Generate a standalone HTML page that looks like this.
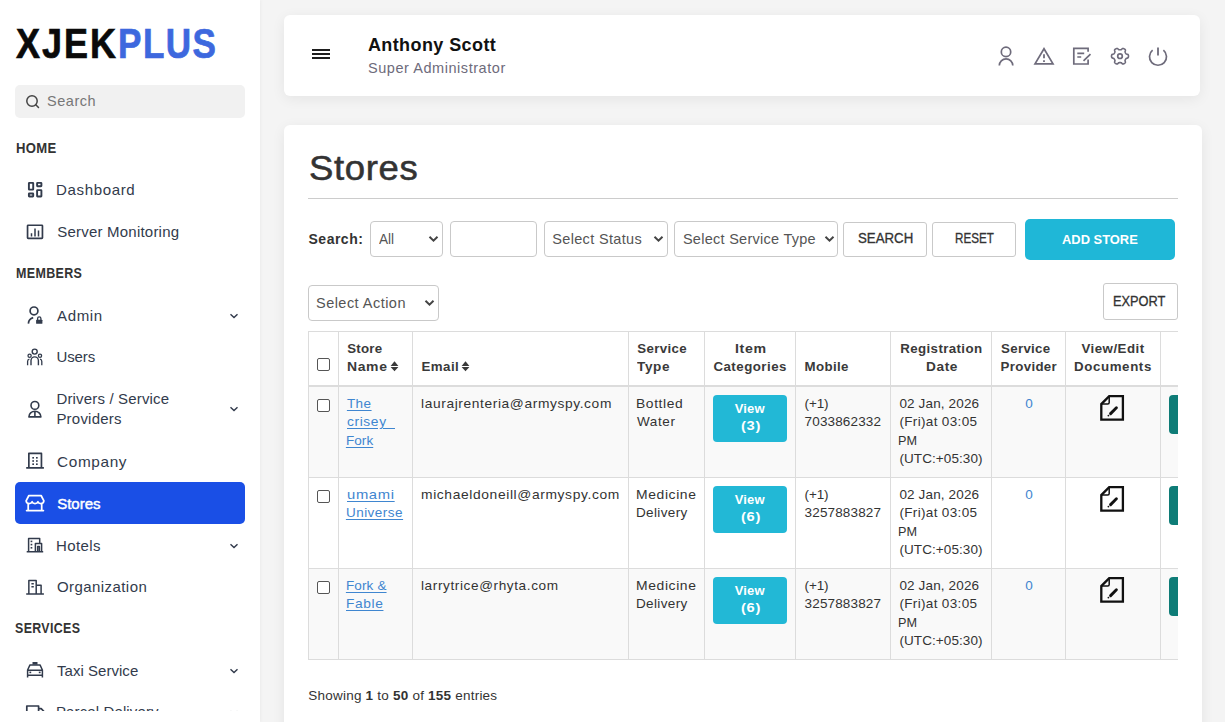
<!DOCTYPE html>
<html><head><meta charset="utf-8"><title>Stores</title>
<style>
html,body{margin:0;padding:0;}
body{width:1225px;height:722px;overflow:hidden;position:relative;background:#f4f4f4;font-family:"Liberation Sans", sans-serif;}
.t{position:absolute;white-space:nowrap;line-height:1;}
</style></head><body>
<div style="position:absolute;left:0.00px;top:0.00px;width:260.00px;height:722.00px;background:#fff;box-shadow:1px 0 3px rgba(0,0,0,0.04);"></div>
<div class="t" style="left:15.80px;top:21.90px;font-size:43px;font-weight:700;color:#0a0a0a;letter-spacing:2.400px;transform:scaleX(0.8370);transform-origin:0 0;-webkit-text-stroke:0.7px #0a0a0a;">XJEK</div>
<div class="t" style="left:118.17px;top:21.90px;font-size:43px;font-weight:700;color:#3d68de;letter-spacing:1.800px;transform:scaleX(0.8162);transform-origin:0 0;-webkit-text-stroke:0.7px #3d68de;">PLUS</div>
<div style="position:absolute;left:15.00px;top:85.00px;width:230.00px;height:33.00px;background:#f1f1f1;border-radius:5px;"></div>
<svg style="position:absolute;left:25px;top:94px" width="16" height="16" viewBox="0 0 16 16"><circle cx="7" cy="7" r="5.2" fill="none" stroke="#444" stroke-width="1.5"/><line x1="10.8" y1="10.8" x2="13.5" y2="13.5" stroke="#444" stroke-width="1.5" stroke-linecap="round"/></svg>
<div class="t" style="left:47.10px;top:94.23px;font-size:14.5px;font-weight:400;color:#777;letter-spacing:0.504px;">Search</div>
<div class="t" style="left:15.50px;top:140.98px;font-size:14.2px;font-weight:700;color:#333;letter-spacing:0.400px;transform:scaleX(0.9215);transform-origin:0 0;">HOME</div>
<div class="t" style="left:15.50px;top:266.18px;font-size:14.2px;font-weight:700;color:#333;letter-spacing:0.400px;transform:scaleX(0.8797);transform-origin:0 0;">MEMBERS</div>
<div class="t" style="left:15.40px;top:621.38px;font-size:14.2px;font-weight:700;color:#333;letter-spacing:0.400px;transform:scaleX(0.8750);transform-origin:0 0;">SERVICES</div>
<div class="t" style="left:56.29px;top:182.30px;font-size:15px;font-weight:400;color:#323b4c;letter-spacing:0.600px;transform:scaleX(1.0060);transform-origin:0 0;">Dashboard</div>
<div class="t" style="left:57.30px;top:224.20px;font-size:15px;font-weight:400;color:#323b4c;letter-spacing:0.210px;">Server Monitoring</div>
<div class="t" style="left:57.40px;top:307.60px;font-size:15px;font-weight:400;color:#323b4c;letter-spacing:0.600px;transform:scaleX(1.0051);transform-origin:0 0;">Admin</div>
<svg style="position:absolute;left:229px;top:311.8px" width="10" height="8" viewBox="0 0 10 8"><polyline points="1.5,2.2 5,5.6 8.5,2.2" fill="none" stroke="#323b4c" stroke-width="1.4"/></svg>
<div class="t" style="left:56.40px;top:349.30px;font-size:15px;font-weight:400;color:#323b4c;letter-spacing:-0.092px;">Users</div>
<div class="t" style="left:56.40px;top:390.60px;font-size:15px;font-weight:400;color:#323b4c;letter-spacing:0.170px;">Drivers / Service</div>
<div class="t" style="left:56.40px;top:411.00px;font-size:15px;font-weight:400;color:#323b4c;letter-spacing:0.218px;">Providers</div>
<svg style="position:absolute;left:229px;top:405px" width="10" height="8" viewBox="0 0 10 8"><polyline points="1.5,2.2 5,5.6 8.5,2.2" fill="none" stroke="#323b4c" stroke-width="1.4"/></svg>
<div class="t" style="left:56.60px;top:453.70px;font-size:15px;font-weight:400;color:#323b4c;letter-spacing:0.600px;transform:scaleX(1.0249);transform-origin:0 0;">Company</div>
<div style="position:absolute;left:15.00px;top:482.00px;width:230.00px;height:41.50px;background:#1a4fe6;border-radius:5px;"></div>
<div class="t" style="left:57.20px;top:495.50px;font-size:15px;font-weight:400;color:#fff;letter-spacing:-0.010px;-webkit-text-stroke:0.45px #fff;">Stores</div>
<div class="t" style="left:56.00px;top:537.80px;font-size:15px;font-weight:400;color:#323b4c;letter-spacing:0.377px;">Hotels</div>
<svg style="position:absolute;left:229px;top:542px" width="10" height="8" viewBox="0 0 10 8"><polyline points="1.5,2.2 5,5.6 8.5,2.2" fill="none" stroke="#323b4c" stroke-width="1.4"/></svg>
<div class="t" style="left:57.00px;top:579.00px;font-size:15px;font-weight:400;color:#323b4c;letter-spacing:0.427px;">Organization</div>
<div class="t" style="left:57.00px;top:662.70px;font-size:15px;font-weight:400;color:#323b4c;letter-spacing:0.035px;">Taxi Service</div>
<svg style="position:absolute;left:229px;top:667px" width="10" height="8" viewBox="0 0 10 8"><polyline points="1.5,2.2 5,5.6 8.5,2.2" fill="none" stroke="#323b4c" stroke-width="1.4"/></svg>
<div class="t" style="left:56.00px;top:704.30px;font-size:15px;font-weight:400;color:#323b4c;letter-spacing:0.117px;">Parcel Delivery</div>
<svg style="position:absolute;left:229px;top:708.5px" width="10" height="8" viewBox="0 0 10 8"><polyline points="1.5,2.2 5,5.6 8.5,2.2" fill="none" stroke="#323b4c" stroke-width="1.4"/></svg>
<div style="position:absolute;left:284.00px;top:15.00px;width:915.50px;height:81.00px;background:#fff;border-radius:6px;box-shadow:0 3px 14px rgba(0,0,0,0.065);"></div>
<div style="position:absolute;left:312.00px;top:49.00px;width:18.00px;height:2.00px;background:#1e1e1e;"></div>
<div style="position:absolute;left:312.00px;top:53.00px;width:18.00px;height:2.00px;background:#1e1e1e;"></div>
<div style="position:absolute;left:312.00px;top:57.00px;width:18.00px;height:2.00px;background:#1e1e1e;"></div>
<div class="t" style="left:367.90px;top:35.76px;font-size:18px;font-weight:700;color:#111;letter-spacing:0.409px;">Anthony Scott</div>
<div class="t" style="left:368.00px;top:60.83px;font-size:14.5px;font-weight:400;color:#6e6b7b;letter-spacing:0.550px;">Super Administrator</div>
<div style="position:absolute;left:284.00px;top:125.00px;width:918.00px;height:700.00px;background:#fff;border-radius:6px;box-shadow:0 3px 14px rgba(0,0,0,0.065);"></div>
<div class="t" style="left:308.56px;top:150.37px;font-size:35px;font-weight:400;color:#333;letter-spacing:0.600px;transform:scaleX(1.0443);transform-origin:0 0;-webkit-text-stroke:0.55px #333;">Stores</div>
<div style="position:absolute;left:308.00px;top:198.00px;width:870.00px;height:1.00px;background:#ccc;"></div>
<div class="t" style="left:308.50px;top:232.25px;font-size:14px;font-weight:700;color:#333;letter-spacing:0.501px;">Search:</div>
<div style="position:absolute;left:370.00px;top:221.00px;width:71.00px;height:34.00px;border:1px solid #c9c9c9;border-radius:4px;background:#fff;"></div>
<svg style="position:absolute;left:428.2px;top:235.0px" width="11" height="8" viewBox="0 0 11 8"><polyline points="1.5,1.8 5.5,5.6 9.5,1.8" fill="none" stroke="#444" stroke-width="2"/></svg>
<div class="t" style="left:378.50px;top:231.83px;font-size:14.5px;font-weight:400;color:#555;transform:scaleX(0.9375);transform-origin:0 0;">All</div>
<div style="position:absolute;left:450.00px;top:221.00px;width:85.00px;height:34.00px;border:1px solid #c9c9c9;border-radius:4px;background:#fff;"></div>
<div style="position:absolute;left:544.00px;top:221.00px;width:122.00px;height:34.00px;border:1px solid #c9c9c9;border-radius:4px;background:#fff;"></div>
<svg style="position:absolute;left:652.8px;top:235.0px" width="11" height="8" viewBox="0 0 11 8"><polyline points="1.5,1.8 5.5,5.6 9.5,1.8" fill="none" stroke="#444" stroke-width="2"/></svg>
<div class="t" style="left:552.30px;top:231.83px;font-size:14.5px;font-weight:400;color:#555;letter-spacing:0.326px;">Select Status</div>
<div style="position:absolute;left:674.00px;top:221.00px;width:162.00px;height:34.00px;border:1px solid #c9c9c9;border-radius:4px;background:#fff;"></div>
<svg style="position:absolute;left:823.9px;top:235.0px" width="11" height="8" viewBox="0 0 11 8"><polyline points="1.5,1.8 5.5,5.6 9.5,1.8" fill="none" stroke="#444" stroke-width="2"/></svg>
<div class="t" style="left:682.90px;top:231.83px;font-size:14.5px;font-weight:400;color:#555;letter-spacing:0.273px;">Select Service Type</div>
<div style="position:absolute;left:308.00px;top:285.00px;width:129.00px;height:34.00px;border:1px solid #c9c9c9;border-radius:4px;background:#fff;"></div>
<svg style="position:absolute;left:424.4px;top:299.0px" width="11" height="8" viewBox="0 0 11 8"><polyline points="1.5,1.8 5.5,5.6 9.5,1.8" fill="none" stroke="#444" stroke-width="2"/></svg>
<div class="t" style="left:316.00px;top:296.23px;font-size:14.5px;font-weight:400;color:#555;letter-spacing:0.470px;">Select Action</div>
<div style="position:absolute;left:843.00px;top:222.00px;width:82.00px;height:33.00px;border:1px solid #c9c9c9;border-radius:3px;background:#fff;"></div>
<div class="t" style="left:858.40px;top:232.32px;font-size:13.8px;font-weight:400;color:#333;transform:scaleX(0.9605);transform-origin:0 0;-webkit-text-stroke:0.3px #333;">SEARCH</div>
<div style="position:absolute;left:932.00px;top:222.00px;width:82.00px;height:33.00px;border:1px solid #c9c9c9;border-radius:3px;background:#fff;"></div>
<div class="t" style="left:954.86px;top:232.32px;font-size:13.8px;font-weight:400;color:#333;transform:scaleX(0.8426);transform-origin:0 0;-webkit-text-stroke:0.3px #333;">RESET</div>
<div style="position:absolute;left:1103.00px;top:283.00px;width:73.00px;height:35.00px;border:1px solid #c9c9c9;border-radius:3px;background:#fff;"></div>
<div class="t" style="left:1113.47px;top:294.92px;font-size:13.8px;font-weight:400;color:#333;transform:scaleX(0.9277);transform-origin:0 0;-webkit-text-stroke:0.3px #333;">EXPORT</div>
<div style="position:absolute;left:1025.00px;top:219.00px;width:150.00px;height:41.00px;background:#1fb7d7;border-radius:5px;"></div>
<div class="t" style="left:1062.10px;top:232.87px;font-size:13.5px;font-weight:700;color:#fff;transform:scaleX(0.9564);transform-origin:0 0;">ADD STORE</div>
<div style="position:absolute;left:308px;top:331px;width:870px;height:340px;overflow:hidden;">
<div style="position:absolute;left:0.00px;top:56.00px;width:870.00px;height:90.50px;background:#f9f9f9;"></div>
<div style="position:absolute;left:0.00px;top:238.00px;width:870.00px;height:91.00px;background:#f9f9f9;"></div>
<div style="position:absolute;left:0.00px;top:0.00px;width:870.00px;height:1.00px;background:#dcdcdc;"></div>
<div style="position:absolute;left:0.00px;top:54.00px;width:870.00px;height:2.00px;background:#dcdcdc;"></div>
<div style="position:absolute;left:0.00px;top:146.00px;width:870.00px;height:1.00px;background:#dcdcdc;"></div>
<div style="position:absolute;left:0.00px;top:237.00px;width:870.00px;height:1.00px;background:#dcdcdc;"></div>
<div style="position:absolute;left:0.00px;top:328.00px;width:870.00px;height:1.00px;background:#dcdcdc;"></div>
<div style="position:absolute;left:0.00px;top:0.00px;width:1.00px;height:329.00px;background:#dcdcdc;"></div>
<div style="position:absolute;left:30.00px;top:0.00px;width:1.00px;height:329.00px;background:#dcdcdc;"></div>
<div style="position:absolute;left:104.00px;top:0.00px;width:1.00px;height:329.00px;background:#dcdcdc;"></div>
<div style="position:absolute;left:320.00px;top:0.00px;width:1.00px;height:329.00px;background:#dcdcdc;"></div>
<div style="position:absolute;left:396.00px;top:0.00px;width:1.00px;height:329.00px;background:#dcdcdc;"></div>
<div style="position:absolute;left:487.00px;top:0.00px;width:1.00px;height:329.00px;background:#dcdcdc;"></div>
<div style="position:absolute;left:582.00px;top:0.00px;width:1.00px;height:329.00px;background:#dcdcdc;"></div>
<div style="position:absolute;left:683.00px;top:0.00px;width:1.00px;height:329.00px;background:#dcdcdc;"></div>
<div style="position:absolute;left:757.00px;top:0.00px;width:1.00px;height:329.00px;background:#dcdcdc;"></div>
<div style="position:absolute;left:852.00px;top:0.00px;width:1.00px;height:329.00px;background:#dcdcdc;"></div>
<div style="position:absolute;left:9.00px;top:27.00px;width:11.00px;height:11.00px;border:1px solid #555;border-radius:2px;background:#fff;"></div>
<div class="t" style="left:39.20px;top:10.54px;font-size:13.3px;font-weight:700;color:#3a3a3a;letter-spacing:0.227px;">Store</div>
<div class="t" style="left:39.20px;top:28.54px;font-size:13.3px;font-weight:700;color:#3a3a3a;letter-spacing:0.600px;transform:scaleX(1.0500);transform-origin:0 0;">Name</div>
<svg style="position:absolute;left:81.5px;top:30.19999999999999px" width="9" height="11" viewBox="0 0 9 11"><polygon points="4.5,0.3 8.4,4.9 0.6,4.9" fill="#3a3a3a"/><polygon points="4.5,10.3 8.4,6.0 0.6,6.0" fill="#3a3a3a"/></svg>
<div class="t" style="left:113.60px;top:28.54px;font-size:13.3px;font-weight:700;color:#3a3a3a;letter-spacing:0.405px;">Email</div>
<svg style="position:absolute;left:152.5px;top:30.19999999999999px" width="9" height="11" viewBox="0 0 9 11"><polygon points="4.5,0.3 8.4,4.9 0.6,4.9" fill="#3a3a3a"/><polygon points="4.5,10.3 8.4,6.0 0.6,6.0" fill="#3a3a3a"/></svg>
<div class="t" style="left:329.20px;top:10.54px;font-size:13.3px;font-weight:700;color:#3a3a3a;letter-spacing:0.346px;">Service</div>
<div class="t" style="left:329.20px;top:28.54px;font-size:13.3px;font-weight:700;color:#3a3a3a;letter-spacing:0.600px;transform:scaleX(1.0206);transform-origin:0 0;">Type</div>
<div class="t" style="left:426.70px;top:10.54px;font-size:13.3px;font-weight:700;color:#3a3a3a;letter-spacing:0.600px;transform:scaleX(1.0630);transform-origin:0 0;">Item</div>
<div class="t" style="left:405.40px;top:28.54px;font-size:13.3px;font-weight:700;color:#3a3a3a;letter-spacing:0.486px;">Categories</div>
<div class="t" style="left:496.50px;top:28.54px;font-size:13.3px;font-weight:700;color:#3a3a3a;letter-spacing:0.378px;">Mobile</div>
<div class="t" style="left:592.30px;top:10.54px;font-size:13.3px;font-weight:700;color:#3a3a3a;letter-spacing:0.377px;">Registration</div>
<div class="t" style="left:617.60px;top:28.54px;font-size:13.3px;font-weight:700;color:#3a3a3a;letter-spacing:0.600px;transform:scaleX(1.0256);transform-origin:0 0;">Date</div>
<div class="t" style="left:693.00px;top:10.54px;font-size:13.3px;font-weight:700;color:#3a3a3a;letter-spacing:0.313px;">Service</div>
<div class="t" style="left:692.50px;top:28.54px;font-size:13.3px;font-weight:700;color:#3a3a3a;letter-spacing:0.332px;">Provider</div>
<div class="t" style="left:773.40px;top:10.54px;font-size:13.3px;font-weight:700;color:#3a3a3a;letter-spacing:0.482px;">View/Edit</div>
<div class="t" style="left:766.30px;top:28.54px;font-size:13.3px;font-weight:700;color:#3a3a3a;letter-spacing:0.600px;transform:scaleX(1.0012);transform-origin:0 0;">Documents</div>
<div style="position:absolute;left:9.00px;top:68.00px;width:11.00px;height:11.00px;border:1px solid #555;border-radius:2px;background:#fff;"></div>
<div class="t" style="left:38.90px;top:65.77px;font-size:13.5px;font-weight:400;color:#3f86d0;letter-spacing:0.473px;text-decoration:underline;text-underline-offset:1.5px;">The</div>
<div class="t" style="left:38.90px;top:84.17px;font-size:13.5px;font-weight:400;color:#3f86d0;letter-spacing:0.600px;transform:scaleX(1.0202);transform-origin:0 0;text-decoration:underline;text-underline-offset:1.5px;">crisey_</div>
<div class="t" style="left:37.90px;top:102.57px;font-size:13.5px;font-weight:400;color:#3f86d0;letter-spacing:0.083px;text-decoration:underline;text-underline-offset:1.5px;">Fork</div>
<div class="t" style="left:113.20px;top:65.77px;font-size:13.5px;font-weight:400;color:#333;letter-spacing:0.600px;transform:scaleX(1.0192);transform-origin:0 0;">laurajrenteria@armyspy.com</div>
<div class="t" style="left:327.98px;top:65.77px;font-size:13.5px;font-weight:400;color:#333;letter-spacing:0.600px;transform:scaleX(1.0244);transform-origin:0 0;">Bottled</div>
<div class="t" style="left:329.00px;top:84.17px;font-size:13.5px;font-weight:400;color:#333;letter-spacing:0.598px;">Water</div>
<div style="position:absolute;left:405.00px;top:64.00px;width:74.00px;height:47.00px;background:#22b8d6;border-radius:4px;"></div>
<div class="t" style="left:426.70px;top:70.90px;font-size:13px;font-weight:700;color:#fff;letter-spacing:0.174px;">View</div>
<div class="t" style="left:432.50px;top:88.00px;font-size:13px;font-weight:700;color:#fff;letter-spacing:0.600px;transform:scaleX(1.1277);transform-origin:0 0;">(3)</div>
<div class="t" style="left:496.60px;top:65.77px;font-size:13.5px;font-weight:400;color:#333;letter-spacing:-0.162px;">(+1)</div>
<div class="t" style="left:496.60px;top:84.17px;font-size:13.5px;font-weight:400;color:#333;letter-spacing:0.147px;">7033862332</div>
<div class="t" style="left:591.40px;top:65.77px;font-size:13.5px;font-weight:400;color:#333;letter-spacing:0.149px;">02 Jan, 2026</div>
<div class="t" style="left:591.40px;top:84.17px;font-size:13.5px;font-weight:400;color:#333;letter-spacing:0.340px;">(Fri)at 03:05</div>
<div class="t" style="left:590.46px;top:102.57px;font-size:13.5px;font-weight:400;color:#333;transform:scaleX(0.9366);transform-origin:0 0;">PM</div>
<div class="t" style="left:591.40px;top:120.97px;font-size:13.5px;font-weight:400;color:#333;letter-spacing:0.086px;">(UTC:+05:30)</div>
<div class="t" style="left:717.20px;top:65.77px;font-size:13.5px;font-weight:400;color:#3f86d0;letter-spacing:0.000px;">0</div>
<svg style="position:absolute;left:792px;top:64px" width="26" height="27" viewBox="0 0 26 27"><path d="M9.2 1.2 H22.9 V24.6 H1.3 V9.1 Z" fill="none" stroke="#111" stroke-width="2.3" stroke-linejoin="miter"/><path d="M9.2 1.6 V7.6 Q9.2 9.1 7.7 9.1 H1.6" fill="none" stroke="#111" stroke-width="1.5"/><path d="M10.6 18.6 L16.4 12.8" stroke="#111" stroke-width="2.9" stroke-linecap="round"/><circle cx="8.4" cy="20.6" r="0.9" fill="#111"/></svg>
<div style="position:absolute;left:861.00px;top:64.00px;width:20.00px;height:39.00px;background:#0e7c77;border-radius:4px;"></div>
<div style="position:absolute;left:9.00px;top:159.00px;width:11.00px;height:11.00px;border:1px solid #555;border-radius:2px;background:#fff;"></div>
<div class="t" style="left:38.90px;top:156.77px;font-size:13.5px;font-weight:400;color:#3f86d0;letter-spacing:0.600px;transform:scaleX(1.0954);transform-origin:0 0;text-decoration:underline;text-underline-offset:1.5px;">umami</div>
<div class="t" style="left:37.90px;top:175.17px;font-size:13.5px;font-weight:400;color:#3f86d0;letter-spacing:0.491px;text-decoration:underline;text-underline-offset:1.5px;">Universe</div>
<div class="t" style="left:113.20px;top:156.77px;font-size:13.5px;font-weight:400;color:#333;letter-spacing:0.600px;transform:scaleX(1.0245);transform-origin:0 0;">michaeldoneill@armyspy.com</div>
<div class="t" style="left:327.97px;top:156.77px;font-size:13.5px;font-weight:400;color:#333;letter-spacing:0.600px;transform:scaleX(1.0296);transform-origin:0 0;">Medicine</div>
<div class="t" style="left:328.00px;top:175.17px;font-size:13.5px;font-weight:400;color:#333;letter-spacing:0.356px;">Delivery</div>
<div style="position:absolute;left:405.00px;top:155.00px;width:74.00px;height:47.00px;background:#22b8d6;border-radius:4px;"></div>
<div class="t" style="left:426.70px;top:161.90px;font-size:13px;font-weight:700;color:#fff;letter-spacing:0.174px;">View</div>
<div class="t" style="left:432.50px;top:179.00px;font-size:13px;font-weight:700;color:#fff;letter-spacing:0.600px;transform:scaleX(1.1277);transform-origin:0 0;">(6)</div>
<div class="t" style="left:496.60px;top:156.77px;font-size:13.5px;font-weight:400;color:#333;letter-spacing:-0.162px;">(+1)</div>
<div class="t" style="left:496.60px;top:175.17px;font-size:13.5px;font-weight:400;color:#333;letter-spacing:0.147px;">3257883827</div>
<div class="t" style="left:591.40px;top:156.77px;font-size:13.5px;font-weight:400;color:#333;letter-spacing:0.149px;">02 Jan, 2026</div>
<div class="t" style="left:591.40px;top:175.17px;font-size:13.5px;font-weight:400;color:#333;letter-spacing:0.340px;">(Fri)at 03:05</div>
<div class="t" style="left:590.46px;top:193.57px;font-size:13.5px;font-weight:400;color:#333;transform:scaleX(0.9366);transform-origin:0 0;">PM</div>
<div class="t" style="left:591.40px;top:211.97px;font-size:13.5px;font-weight:400;color:#333;letter-spacing:0.086px;">(UTC:+05:30)</div>
<div class="t" style="left:717.20px;top:156.77px;font-size:13.5px;font-weight:400;color:#3f86d0;letter-spacing:0.000px;">0</div>
<svg style="position:absolute;left:792px;top:155px" width="26" height="27" viewBox="0 0 26 27"><path d="M9.2 1.2 H22.9 V24.6 H1.3 V9.1 Z" fill="none" stroke="#111" stroke-width="2.3" stroke-linejoin="miter"/><path d="M9.2 1.6 V7.6 Q9.2 9.1 7.7 9.1 H1.6" fill="none" stroke="#111" stroke-width="1.5"/><path d="M10.6 18.6 L16.4 12.8" stroke="#111" stroke-width="2.9" stroke-linecap="round"/><circle cx="8.4" cy="20.6" r="0.9" fill="#111"/></svg>
<div style="position:absolute;left:861.00px;top:155.00px;width:20.00px;height:39.00px;background:#0e7c77;border-radius:4px;"></div>
<div style="position:absolute;left:9.00px;top:250.00px;width:11.00px;height:11.00px;border:1px solid #555;border-radius:2px;background:#fff;"></div>
<div class="t" style="left:37.90px;top:247.77px;font-size:13.5px;font-weight:400;color:#3f86d0;letter-spacing:0.150px;text-decoration:underline;text-underline-offset:1.5px;">Fork &amp;</div>
<div class="t" style="left:37.88px;top:266.17px;font-size:13.5px;font-weight:400;color:#3f86d0;letter-spacing:0.600px;transform:scaleX(1.0184);transform-origin:0 0;text-decoration:underline;text-underline-offset:1.5px;">Fable</div>
<div class="t" style="left:113.20px;top:247.77px;font-size:13.5px;font-weight:400;color:#333;letter-spacing:0.600px;transform:scaleX(1.0068);transform-origin:0 0;">larrytrice@rhyta.com</div>
<div class="t" style="left:327.97px;top:247.77px;font-size:13.5px;font-weight:400;color:#333;letter-spacing:0.600px;transform:scaleX(1.0296);transform-origin:0 0;">Medicine</div>
<div class="t" style="left:328.00px;top:266.17px;font-size:13.5px;font-weight:400;color:#333;letter-spacing:0.356px;">Delivery</div>
<div style="position:absolute;left:405.00px;top:246.00px;width:74.00px;height:47.00px;background:#22b8d6;border-radius:4px;"></div>
<div class="t" style="left:426.70px;top:252.90px;font-size:13px;font-weight:700;color:#fff;letter-spacing:0.174px;">View</div>
<div class="t" style="left:432.50px;top:270.00px;font-size:13px;font-weight:700;color:#fff;letter-spacing:0.600px;transform:scaleX(1.1277);transform-origin:0 0;">(6)</div>
<div class="t" style="left:496.60px;top:247.77px;font-size:13.5px;font-weight:400;color:#333;letter-spacing:-0.162px;">(+1)</div>
<div class="t" style="left:496.60px;top:266.17px;font-size:13.5px;font-weight:400;color:#333;letter-spacing:0.147px;">3257883827</div>
<div class="t" style="left:591.40px;top:247.77px;font-size:13.5px;font-weight:400;color:#333;letter-spacing:0.149px;">02 Jan, 2026</div>
<div class="t" style="left:591.40px;top:266.17px;font-size:13.5px;font-weight:400;color:#333;letter-spacing:0.340px;">(Fri)at 03:05</div>
<div class="t" style="left:590.46px;top:284.57px;font-size:13.5px;font-weight:400;color:#333;transform:scaleX(0.9366);transform-origin:0 0;">PM</div>
<div class="t" style="left:591.40px;top:302.97px;font-size:13.5px;font-weight:400;color:#333;letter-spacing:0.086px;">(UTC:+05:30)</div>
<div class="t" style="left:717.20px;top:247.77px;font-size:13.5px;font-weight:400;color:#3f86d0;letter-spacing:0.000px;">0</div>
<svg style="position:absolute;left:792px;top:246px" width="26" height="27" viewBox="0 0 26 27"><path d="M9.2 1.2 H22.9 V24.6 H1.3 V9.1 Z" fill="none" stroke="#111" stroke-width="2.3" stroke-linejoin="miter"/><path d="M9.2 1.6 V7.6 Q9.2 9.1 7.7 9.1 H1.6" fill="none" stroke="#111" stroke-width="1.5"/><path d="M10.6 18.6 L16.4 12.8" stroke="#111" stroke-width="2.9" stroke-linecap="round"/><circle cx="8.4" cy="20.6" r="0.9" fill="#111"/></svg>
<div style="position:absolute;left:861.00px;top:246.00px;width:20.00px;height:39.00px;background:#0e7c77;border-radius:4px;"></div>
</div>
<div class="t" style="left:308.3px;top:689.17px;font-size:13.5px;font-weight:400;color:#333;letter-spacing:0.22px;">Showing <b>1</b> to <b>50</b> of <b>155</b> entries</div>
<svg style="position:absolute;left:0;top:0;pointer-events:none" width="1225" height="722" viewBox="0 0 1225 722">
<g fill="none" stroke="#323b4c" stroke-width="1.7" stroke-linejoin="round">
  <!-- dashboard -->
  <rect x="28.9" y="182.9" width="4.3" height="6.7" rx="0.4" stroke-width="1.9"/>
  <rect x="37.1" y="182.9" width="4.3" height="3.3" rx="0.4" stroke-width="1.9"/>
  <rect x="28.9" y="193.5" width="4.3" height="3.0" rx="0.4" stroke-width="1.9"/>
  <rect x="37.1" y="190.1" width="4.3" height="6.4" rx="0.4" stroke-width="1.9"/>
  <!-- monitoring -->
  <rect x="27.55" y="225.25" width="14.9" height="13.2" rx="0.6"/>
  <path d="M31.5 233.2 V236.6 M35 228.4 V236.6 M38.5 230.4 V236.6" stroke-width="1.5"/>
  <!-- admin -->
  <circle cx="34" cy="310.9" r="3.9"/>
  <path d="M28.4 323.6 A6.6 6.6 0 0 1 33.2 317.6"/>
  <path d="M37.6 320 V318.6 A1.65 1.65 0 0 1 40.9 318.6 V320" stroke-width="1.3"/>
  <!-- users -->
  <circle cx="34.7" cy="351.6" r="2.5" stroke-width="1.4"/>
  <circle cx="29.6" cy="355.8" r="1.6" stroke-width="1.3"/>
  <circle cx="40" cy="355.8" r="1.6" stroke-width="1.3"/>
  <path d="M31 365.2 V360.6 A3.7 3.7 0 0 1 38.4 360.6 V365.2" stroke-width="1.4"/>
  <path d="M27.6 365.2 V361.4 A2.2 2.2 0 0 1 29.4 359.2" stroke-width="1.3"/>
  <path d="M41.8 365.2 V361.4 A2.2 2.2 0 0 0 40 359.2" stroke-width="1.3"/>
  <!-- drivers -->
  <circle cx="34.9" cy="405.4" r="3.9" stroke-width="1.6"/>
  <path d="M28.9 416.9 A6 5.6 0 0 1 40.9 416.9 Z M34.9 411.3 V416.9" stroke-width="1.6"/>
  <!-- company -->
  <path d="M28.85 467.8 V453.45 H41.45 V467.8 M26.2 467.85 H43.9"/>
  <!-- hotels -->
  <path d="M28.6 551.8 V538.4 H39.7 V542.9 M35.4 551.8 V543.5 H41.6 V551.8 M26.7 551.85 H43.2 M37.7 551.8 V546.6 H39.4 V551.8" stroke-width="1.5"/>
  <!-- organization -->
  <path d="M28.85 593.9 V580.6 H36.2 V593.9 M36.2 585.3 H41.1 V593.9 M26.2 593.95 H43.9 M31.4 583.8 H33.8 M31.4 586.8 H33.8" stroke-width="1.5"/>
  <!-- taxi -->
  <path d="M27.6 677.5 V670 L30 664.9 H40 L42.4 670 V677.5 M27.6 670.2 H42.4 M27.6 675.3 H42.4" stroke-width="1.5"/>
  <!-- parcel -->
  <path d="M26.8 713 V706 H38.6 V713 M38.6 708.6 H41.2 L44 711.5" stroke-width="1.7"/>
</g>
<g fill="#323b4c" stroke="none">
  <rect x="36.1" y="319.7" width="6.3" height="4.1" rx="0.6"/>
  <rect x="32.3" y="457" width="1.7" height="1.6"/><rect x="36" y="457" width="1.7" height="1.6"/>
  <rect x="32.3" y="460.2" width="1.7" height="1.6"/><rect x="36" y="460.2" width="1.7" height="1.6"/>
  <rect x="32.3" y="463.4" width="1.7" height="1.6"/><rect x="36" y="463.4" width="1.7" height="1.6"/>
  <rect x="30.6" y="540.6" width="1.7" height="1.6"/><rect x="30.6" y="543.8" width="1.7" height="1.6"/><rect x="30.6" y="547" width="1.7" height="1.6"/>
  <rect x="32.5" y="662" width="5" height="2.6"/>
  <rect x="29.4" y="671.6" width="1.8" height="1.6"/><rect x="38.8" y="671.6" width="1.8" height="1.6"/>
</g>
<!-- stores (white) -->
<g fill="none" stroke="#fff" stroke-width="1.75" stroke-linejoin="round" stroke-linecap="round">
  <path d="M28.9 495.5 H41.1 L43.9 500.8 Q43.7 503.5 40.9 503.5 Q38.6 503.5 37.9 501.7 Q37.2 503.5 35 503.5 Q32.8 503.5 32.1 501.7 Q31.4 503.5 29.1 503.5 Q26.3 503.5 26.1 500.8 Z"/>
  <path d="M28.2 503.8 V510.6 M41.7 503.8 V510.6 M26.6 510.6 H43.4"/>
</g>
<!-- header icons -->
<g fill="none" stroke="#6e6b7b" stroke-width="1.7" stroke-linecap="butt" stroke-linejoin="miter">
  <circle cx="1006" cy="51.9" r="4.7"/>
  <path d="M999.3 65.6 A6.75 6.75 0 0 1 1012.8 65.6"/>
  <path d="M1044 48.7 L1035.0 63.9 H1053.0 Z"/>
  <path d="M1044 54.2 V58.2" stroke-width="1.8"/>
  <path d="M1088.1 51.8 V48.3 H1073.8 V64 H1088.1 V59.6"/>
  <path d="M1077.3 53.3 H1084.2 M1077.3 57 H1081.2"/>
  <path d="M1083.5 60.9 L1090.5 54.2"/>
  <path d="M1158 47.4 V55.6" stroke-width="1.8"/>
  <path d="M1152.6 50.2 A8.5 8.5 0 1 0 1163.4 50.2"/>
  <circle cx="1120" cy="56.2" r="2.3"/>
  <path d="M1128.50 56.20 L1128.47 56.64 L1128.38 57.08 L1128.22 57.50 L1127.97 57.89 L1127.20 58.13 L1126.42 58.29 L1126.14 58.56 L1125.92 58.83 L1125.72 59.11 L1125.54 59.40 L1125.38 59.70 L1125.24 60.01 L1125.11 60.34 L1125.02 60.72 L1125.27 61.47 L1125.45 62.25 L1125.24 62.67 L1124.95 63.02 L1124.62 63.31 L1124.25 63.56 L1123.85 63.76 L1123.43 63.90 L1122.98 63.97 L1122.52 63.95 L1121.93 63.40 L1121.40 62.81 L1121.03 62.70 L1120.68 62.64 L1120.34 62.61 L1120.00 62.60 L1119.66 62.61 L1119.32 62.64 L1118.97 62.70 L1118.60 62.81 L1118.07 63.40 L1117.48 63.95 L1117.02 63.97 L1116.57 63.90 L1116.15 63.76 L1115.75 63.56 L1115.38 63.31 L1115.05 63.02 L1114.76 62.67 L1114.55 62.25 L1114.73 61.47 L1114.98 60.72 L1114.89 60.34 L1114.76 60.01 L1114.62 59.70 L1114.46 59.40 L1114.28 59.11 L1114.08 58.83 L1113.86 58.56 L1113.58 58.29 L1112.80 58.13 L1112.03 57.89 L1111.78 57.50 L1111.62 57.08 L1111.53 56.64 L1111.50 56.20 L1111.53 55.76 L1111.62 55.32 L1111.78 54.90 L1112.03 54.51 L1112.80 54.27 L1113.58 54.11 L1113.86 53.84 L1114.08 53.57 L1114.28 53.29 L1114.46 53.00 L1114.62 52.70 L1114.76 52.39 L1114.89 52.06 L1114.98 51.68 L1114.73 50.93 L1114.55 50.15 L1114.76 49.73 L1115.05 49.38 L1115.38 49.09 L1115.75 48.84 L1116.15 48.64 L1116.57 48.50 L1117.02 48.43 L1117.48 48.45 L1118.07 49.00 L1118.60 49.59 L1118.97 49.70 L1119.32 49.76 L1119.66 49.79 L1120.00 49.80 L1120.34 49.79 L1120.68 49.76 L1121.03 49.70 L1121.40 49.59 L1121.93 49.00 L1122.52 48.45 L1122.98 48.43 L1123.43 48.50 L1123.85 48.64 L1124.25 48.84 L1124.62 49.09 L1124.95 49.38 L1125.24 49.73 L1125.45 50.15 L1125.27 50.93 L1125.02 51.68 L1125.11 52.06 L1125.24 52.39 L1125.38 52.70 L1125.54 53.00 L1125.72 53.29 L1125.92 53.57 L1126.14 53.84 L1126.42 54.11 L1127.20 54.27 L1127.97 54.51 L1128.22 54.90 L1128.38 55.32 L1128.47 55.76 Z" stroke-width="1.6"/>
</g>
<path d="M1044 60.3 V61.9" stroke="#6e6b7b" stroke-width="1.8"/>
</svg>
<div style="position:absolute;left:0.00px;top:711.00px;width:260.00px;height:11.00px;background:#fff;"></div>
</body></html>
